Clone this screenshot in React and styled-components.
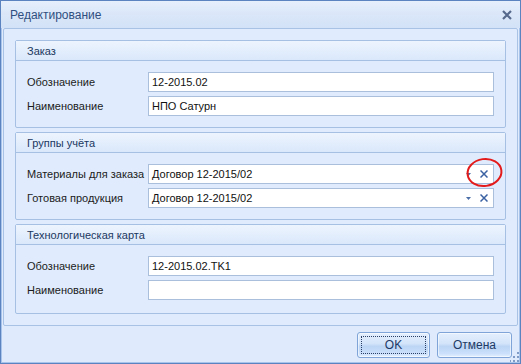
import React from "react";
import styled, { createGlobalStyle } from "styled-components";

const Global = createGlobalStyle`
  html, body { margin: 0; padding: 0; width: 521px; height: 364px; overflow: hidden; background: #dfeafb; }
  * { box-sizing: border-box; }
  body { font-family: "Liberation Sans", Arial, sans-serif; font-size: 11px; }
`;

const Window = styled.div`
  position: relative;
  width: 521px;
  height: 364px;
  border: 1px solid #5b83bf;
  box-shadow: inset 1px 1px 0 #a9c4ea, inset -1px -1px 0 #a9c4ea;
  background: #dfebfc;
  display: flex;
  flex-direction: column;
`;

const TitleBar = styled.div`
  height: 27px;
  flex: none;
  display: flex;
  align-items: center;
  justify-content: space-between;
  padding: 0 8px 0 9px;
  background: linear-gradient(#e6effc 0%, #dbe7f9 45%, #d3e2f7 100%);
`;

const Title = styled.div`
  font-size: 12px;
  color: #2f4f80;
`;

const CloseBtn = styled.div`
  width: 10px;
  height: 10px;
  display: flex;
`;

const Panel = styled.div`
  margin: 0 2px;
  height: 298px;
  flex: none;
  border: 1px solid #a8c2e6;
  border-radius: 2px;
  padding: 11px;
  display: flex;
  flex-direction: column;
  gap: 3px;
  background: #e0ecfd;
`;

const Group = styled.div`
  border: 1px solid #a6c0e4;
  border-radius: 2px;
  height: ${(p) => (p.$grow ? "auto" : "88px")};
  flex: ${(p) => (p.$grow ? "1" : "none")};
  ${(p) => (p.$extra ? `margin-top: 1px;` : "")}
  display: flex;
  flex-direction: column;
  background: #e0ecfd;
`;

const GroupHeader = styled.div`
  height: 20px;
  flex: none;
  border-bottom: 1px solid #a6c0e4;
  background: linear-gradient(#edf4fe, #dae8fb);
  padding-left: 11px;
  display: flex;
  align-items: center;
  color: #20385f;
  font-size: 11px;
`;

const GroupBody = styled.div`
  padding: 11px 11px 0 11px;
  display: grid;
  grid-template-columns: 121px 1fr;
  row-gap: 4px;
  align-items: center;
`;

const Label = styled.div`
  font-size: 11px;
  color: #1b1b1b;
  white-space: nowrap;
`;

const Field = styled.div`
  position: relative;
  height: 20px;
  background: #fff;
  border: 1px solid #a9bfdc;
  display: flex;
  align-items: center;
  padding-left: 3px;
  font-size: 11px;
  color: #111;
`;

const FieldText = styled.span`
  flex: 1;
`;

const ComboButtons = styled.div`
  display: flex;
  align-items: center;
  gap: 9px;
  padding-right: 5px;
`;

const Highlight = styled.svg`
  position: absolute;
  right: -10px;
  top: -7px;
  width: 37px;
  height: 30px;
  overflow: visible;
  pointer-events: none;
`;

const Footer = styled.div`
  flex: 1;
  display: flex;
  justify-content: flex-end;
  align-items: flex-start;
  padding: 6px 8px 0 0;
  gap: 7px;
`;

const Button = styled.div`
  position: relative;
  width: ${(p) => p.$w}px;
  height: 26px;
  border: 1px solid #7fa4d8;
  border-radius: 3px;
  background: linear-gradient(#e4effd 0%, #d3e4fa 45%, #bcd5f5 55%, #cae0fb 85%, #e3f0ff 100%);
  box-shadow: inset 0 0 0 1px rgba(255,255,255,0.55);
  display: flex;
  align-items: center;
  justify-content: center;
  color: #1d3a66;
  font-size: 12px;
`;

const Focus = styled.div`
  position: absolute;
  inset: 3px;
  border: 1px dotted #2a3f66;
`;

const Grip = styled.svg`
  position: absolute;
  right: 1px;
  bottom: 1px;
  width: 9px;
  height: 10px;
`;

const ArrowDown = () => (
  <svg width="5" height="3" viewBox="0 0 5 3"><path d="M0 0H5L2.5 3Z" fill="#4a6ea8" /></svg>
);

const ClearX = () => (
  <svg width="8" height="8" viewBox="0 0 8 8">
    <path d="M0.5 0.5L7.5 7.5M7.5 0.5L0.5 7.5" stroke="#3a62a3" strokeWidth="1.5" />
  </svg>
);

const Row = ({ label, value }) => (
  <>
    <Label>{label}</Label>
    <Field><FieldText>{value}</FieldText></Field>
  </>
);

const ComboRow = ({ label, value, marked }) => (
  <>
    <Label>{label}</Label>
    <Field>
      <FieldText>{value}</FieldText>
      <ComboButtons>
        <ArrowDown />
        <ClearX />
      </ComboButtons>
      {marked && (
        <Highlight viewBox="0 0 37 30">
          <ellipse cx="18.5" cy="14.5" rx="17" ry="13.5" fill="none" stroke="#e41b1b" strokeWidth="2" transform="rotate(-8 18.5 14.5)" />
        </Highlight>
      )}
    </Field>
  </>
);

export default function App() {
  return (
    <>
      <Global />
      <Window>
        <TitleBar>
          <Title>Редактирование</Title>
          <CloseBtn>
            <svg width="10" height="10" viewBox="0 0 10 10">
              <path d="M1 1L9 9M9 1L1 9" stroke="#56698c" strokeWidth="2.2" />
            </svg>
          </CloseBtn>
        </TitleBar>
        <Panel>
          <Group>
            <GroupHeader>Заказ</GroupHeader>
            <GroupBody>
              <Row label="Обозначение" value="12-2015.02" />
              <Row label="Наименование" value="НПО Сатурн" />
            </GroupBody>
          </Group>
          <Group $extra>
            <GroupHeader>Группы учёта</GroupHeader>
            <GroupBody>
              <ComboRow label="Материалы для заказа" value="Договор 12-2015/02" marked />
              <ComboRow label="Готовая продукция" value="Договор 12-2015/02" />
            </GroupBody>
          </Group>
          <Group $grow $extra>
            <GroupHeader>Технологическая карта</GroupHeader>
            <GroupBody>
              <Row label="Обозначение" value="12-2015.02.TK1" />
              <Row label="Наименование" value="" />
            </GroupBody>
          </Group>
        </Panel>
        <Footer>
          <Button $w={73}>OK<Focus /></Button>
          <Button $w={75}>Отмена</Button>
        </Footer>
        <Grip viewBox="0 0 9 10">
          {[[6, 0], [6, 4], [2, 4], [6, 8], [2, 8], [-2, 8]].map(([x, y], i) => (
            <rect key={i} x={x + 1} y={y} width="2" height="2" fill="#7f9bc6" />
          ))}
        </Grip>
      </Window>
    </>
  );
}
